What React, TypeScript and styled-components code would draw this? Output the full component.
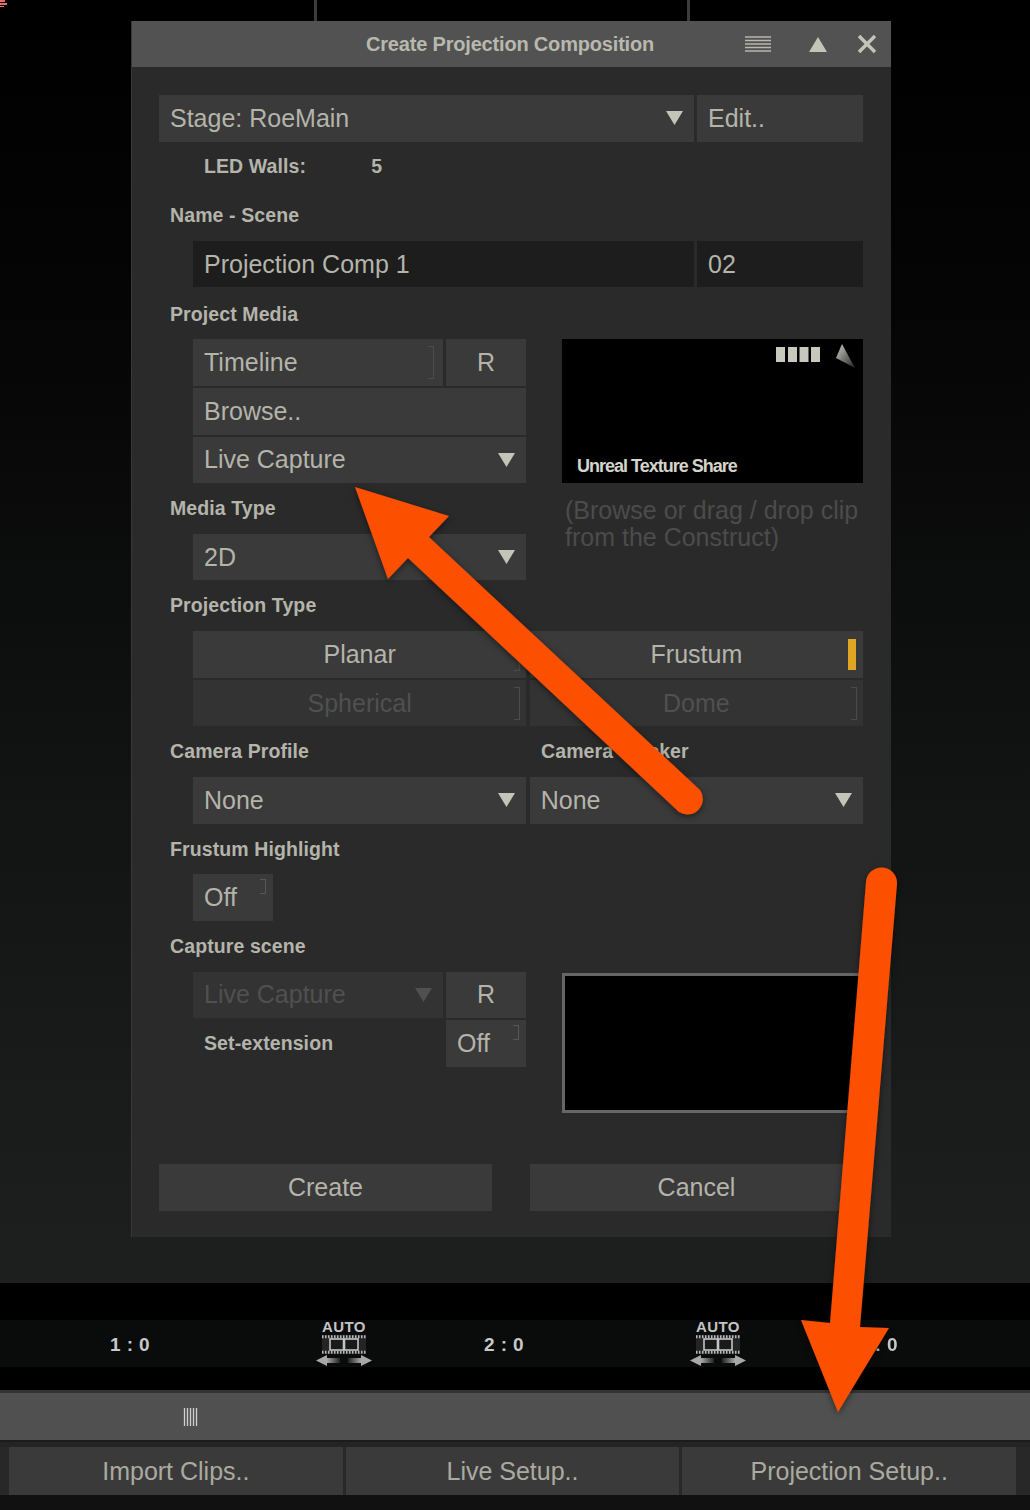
import React from "react";
import styled, { createGlobalStyle } from "styled-components";

const Global = createGlobalStyle`
  html, body { margin: 0; padding: 0; background: #000; }
  * { box-sizing: border-box; }
  #root { width: 1030px; height: 1510px; overflow: hidden; }
`;

const Page = styled.div`
  position: relative;
  width: 1030px;
  height: 1510px;
  background: #0f1010;
  font-family: "Liberation Sans", Arial, sans-serif;
  color: #b4b4aa;
  overflow: hidden;
`;
const Soft = styled.div`
  filter: blur(0.45px);
`;
const Workspace = styled.div`
  height: 1283px;
  background: linear-gradient(#000 0, #050505 320px, #121313 800px, #1d1f1f 1240px);
`;
const TopStrip = styled.div`
  height: 21px;
  display: flex;
  gap: 370px;
  padding-left: 314px;
`;
const TopLine = styled.div`
  width: 3px;
  height: 21px;
  background: #3c3c3c;
`;
const Dialog = styled.section`
  width: 760px;
  margin-left: 131px;
  height: 1216px;
  background: #2a2a2a;
  border-left: 1px solid #383838;
`;
const TitleBar = styled.header`
  height: 46px;
  background: #525252;
  display: grid;
  grid-template-columns: 1fr auto 1fr;
  align-items: center;
  padding: 0 14px 0 11px;
`;
const Title = styled.h1`
  margin: 0;
  font-size: 20px;
  font-weight: 700;
  letter-spacing: -0.18px;
  color: #b8b8ae;
`;
const TitleIcons = styled.div`
  display: flex;
  justify-content: flex-end;
  align-items: center;
`;
const Form = styled.div`
  display: flex;
  flex-direction: column;
  gap: 2.15px;
  padding: 28px 28px 0 27px;
`;
const Row = styled.div<{ $indent?: boolean }>`
  display: flex;
  gap: 3.5px;
  height: 46.5px;
  padding-left: ${(p) => (p.$indent ? "34px" : "0")};
`;
const Cell = styled.div<{ $tone?: "field" | "input"; $off?: boolean; $center?: boolean; $w?: number }>`
  flex: ${(p) => (p.$w ? `0 0 ${p.$w}px` : "1 1 0")};
  min-width: 0;
  height: 100%;
  display: flex;
  align-items: center;
  justify-content: ${(p) => (p.$center ? "center" : "flex-start")};
  padding: 0 ${(p) => (p.$center ? "0" : "11px")} 0 ${(p) => (p.$center ? "0" : "11px")};
  background: ${(p) => (p.$tone === "input" ? "#1d1d1d" : p.$off ? "#333333" : "#3a3a3a")};
  color: ${(p) => (p.$off ? "#505050" : "#b4b4aa")};
  font-size: 25px;
  white-space: nowrap;
  position: relative;
`;
const CellText = styled.span`
  flex: 1 1 auto;
`;
const CenterText = styled.span`
  flex: none;
`;
const Label = styled.div<{ $indent?: boolean; $gapAbove?: boolean }>`
  height: 46.5px;
  display: flex;
  align-items: center;
  padding-left: ${(p) => (p.$indent ? "45px" : "11px")};
  margin-top: ${(p) => (p.$gapAbove ? "1.2px" : "0")};
  font-size: 19.5px;
  font-weight: 700;
  letter-spacing: 0.1px;
  color: #b4b4aa;
`;
const LabelRow = styled(Label)`
  gap: 65px;
`;
const SplitLabels = styled.div`
  display: grid;
  grid-template-columns: 371px 1fr;
`;
const InlineLabel = styled.div`
  flex: 1 1 0;
  height: 100%;
  display: flex;
  align-items: center;
  padding-left: 11px;
  font-size: 19.5px;
  font-weight: 700;
  letter-spacing: 0.1px;
`;
const Block = styled.div`
  display: flex;
  gap: 36px;
  align-items: flex-start;
`;
const BlockLeft = styled.div`
  flex: 0 0 367px;
  display: flex;
  flex-direction: column;
  gap: 2.15px;
`;
const BlockRight = styled.div`
  flex: 1 1 0;
  min-width: 0;
`;
const Preview = styled.div`
  height: 144px;
  background: #000;
  padding: 5px 7px 6px 15px;
  display: flex;
  flex-direction: column;
  justify-content: space-between;
`;
const PreviewTop = styled.div`
  display: flex;
  justify-content: flex-end;
`;
const PreviewCaption = styled.div`
  font-size: 18px;
  font-weight: 700;
  line-height: 22px;
  letter-spacing: -1px;
  color: #d4d4ca;
`;
const Hint = styled.p`
  margin: 14px 0 0 3px;
  font-size: 25px;
  line-height: 27px;
  color: #4c4c4c;
  white-space: nowrap;
`;
const ScenePreview = styled.div`
  margin-top: 1px;
  height: 140px;
  background: #000;
  border: 3px solid #666;
`;
const Actions = styled.div`
  display: flex;
  gap: 38px;
  height: 47px;
  margin-top: 49px;
`;
const Marker = styled.i`
  flex: none;
  display: block;
  width: 6px;
  height: 33px;
  margin-right: -2px;
  border: 1px solid #4c4c4c;
  border-left: 0;
`;
const EdgeMarker = styled(Marker)`
  position: absolute;
  right: 6px;
  top: 7px;
  margin: 0;
`;
const SmallMarker = styled(Marker)`
  position: absolute;
  right: 7px;
  top: 5px;
  height: 15px;
  margin: 0;
  border-color: #565656;
`;
const ActiveMarker = styled.i`
  position: absolute;
  right: 7px;
  top: 8px;
  width: 8px;
  height: 31px;
  background: #e0a622;
`;
const Timeline = styled.div`
  height: 107px;
  padding-top: 37px;
  background: #000;
`;
const TimeRow = styled.div`
  height: 47px;
  background: #0a0b0b;
  display: flex;
  align-items: center;
  padding-left: 100px;
`;
const Track = styled.div`
  flex: 0 0 374px;
  display: flex;
  align-items: center;
`;
const TrackNumber = styled.span`
  flex: 0 0 60px;
  margin-top: 3px;
  text-align: center;
  font-size: 19px;
  font-weight: 700;
  letter-spacing: 0.4px;
  color: #c8c8c8;
  white-space: nowrap;
`;
const AutoBadge = styled.div`
  margin-left: 156px;
  flex: 0 0 54px;
  display: flex;
  flex-direction: column;
  align-items: center;
`;
const AutoText = styled.span`
  font-size: 15px;
  line-height: 16px;
  font-weight: 700;
  letter-spacing: 0.4px;
  color: #c4c4c4;
`;
const BottomBar = styled.div`
  height: 120px;
  background: #111;
`;
const GripBar = styled.div`
  height: 50px;
  background: #505050;
  border-top: 3px solid #333;
  display: flex;
  align-items: center;
  padding-left: 183px;
`;
const Divider = styled.div`
  height: 7px;
  background: #242424;
  border-top: 2px solid #1c1c1c;
`;
const BottomButtons = styled.div`
  display: flex;
  gap: 3px;
  height: 48px;
  padding: 0 14px 0 9px;
  background: #282828;
`;
const BottomButton = styled.div`
  flex: 1 1 0;
  display: flex;
  align-items: center;
  justify-content: center;
  padding-top: 1px;
  background: #3a3a3a;
  font-size: 25px;
  color: #aaaaa0;
`;
const Overlay = styled.svg`
  position: absolute;
  left: 0;
  top: 0;
  pointer-events: none;
`;

const Caret = ({ off }: { off?: boolean }) => (
  <svg width="17" height="14" viewBox="0 0 17 14" style={{ flex: "none" }}>
    <path d="M0 0H17L8.5 14Z" fill={off ? "#505050" : "#c4c4b8"} />
  </svg>
);

const Film = ({ id }: { id: string }) => (
  <svg width="56" height="33" viewBox="0 0 56 33">
    <defs>
      <linearGradient id={`${id}l`} x1="0" y1="0" x2="1" y2="0">
        <stop offset="0" stopColor="#a8a8a8" />
        <stop offset="1" stopColor="#222" />
      </linearGradient>
      <linearGradient id={`${id}r`} x1="1" y1="0" x2="0" y2="0">
        <stop offset="0" stopColor="#a8a8a8" />
        <stop offset="1" stopColor="#222" />
      </linearGradient>
    </defs>
    <rect x="6" y="0" width="44" height="19" fill="#242424" />
    <path d="M6 1.700H50M6 17.300H50" stroke="#b8b8b8" strokeWidth="3" strokeDasharray="1.500 1.500" />
    <rect x="14" y="4" width="13.500" height="11" fill="#1a1a1a" stroke="#c4c4c4" strokeWidth="1.600" />
    <rect x="28.500" y="4" width="13.500" height="11" fill="#1a1a1a" stroke="#c4c4c4" strokeWidth="1.600" />
    <path d="M0 25.500L11 20V31Z" fill="#a8a8a8" />
    <path d="M56 25.500L45 20V31Z" fill="#a8a8a8" />
    <rect x="11" y="23" width="13" height="5" fill={`url(#${id}l)`} />
    <rect x="32" y="23" width="13" height="5" fill={`url(#${id}r)`} />
  </svg>
);

export default function App() {
  return (
    <Page>
      <Global />
      <Soft>
        <Workspace>
          <TopStrip>
            <TopLine />
            <TopLine />
          </TopStrip>
          <Dialog>
            <TitleBar>
              <span />
              <Title>Create Projection Composition</Title>
              <TitleIcons>
                <svg width="26" height="17" viewBox="0 0 26 17" style={{ marginRight: 38 }}>
                  <path d="M0 1H26M0 4.500H26M0 8H26M0 11.500H26M0 15H26" stroke="#b8b8ae" strokeWidth="1.500" />
                </svg>
                <svg width="18" height="15" viewBox="0 0 18 15" style={{ marginRight: 30 }}>
                  <path d="M9 0L18 15H0Z" fill="#c4c4b8" />
                </svg>
                <svg width="20" height="20" viewBox="0 0 20 20">
                  <path d="M2 2L18 18M18 2L2 18" stroke="#c4c4b8" strokeWidth="3.400" />
                </svg>
              </TitleIcons>
            </TitleBar>
            <Form>
              <Row>
                <Cell>
                  <CellText>Stage: RoeMain</CellText>
                  <Caret />
                </Cell>
                <Cell $w={166}>Edit..</Cell>
              </Row>
              <LabelRow $indent>
                <span>LED Walls:</span>
                <span>5</span>
              </LabelRow>
              <Label>Name - Scene</Label>
              <Row $indent>
                <Cell $tone="input">Projection Comp 1</Cell>
                <Cell $tone="input" $w={166}>02</Cell>
              </Row>
              <Label $gapAbove>Project Media</Label>
              <Block>
                <BlockLeft>
                  <Row $indent>
                    <Cell>
                      <CellText>Timeline</CellText>
                      <Marker />
                    </Cell>
                    <Cell $w={80} $center><CenterText>R</CenterText></Cell>
                  </Row>
                  <Row $indent>
                    <Cell>Browse..</Cell>
                  </Row>
                  <Row $indent>
                    <Cell>
                      <CellText>Live Capture</CellText>
                      <Caret />
                    </Cell>
                  </Row>
                  <Label>Media Type</Label>
                  <Row $indent>
                    <Cell>
                      <CellText>2D</CellText>
                      <Caret />
                    </Cell>
                  </Row>
                </BlockLeft>
                <BlockRight>
                  <Preview>
                    <PreviewTop>
                      <svg width="80" height="28" viewBox="0 0 80 28">
                        <rect x="0" y="3" width="9" height="15" fill="#c8c8bc" />
                        <rect x="12" y="3" width="9" height="15" fill="#c8c8bc" />
                        <rect x="23.500" y="3" width="9" height="15" fill="#c8c8bc" />
                        <rect x="35" y="3" width="9" height="15" fill="#c8c8bc" />
                        <defs>
                          <linearGradient id="curl" x1="0" y1="0" x2="1" y2="1">
                            <stop offset="0" stopColor="#d0d0c6" />
                            <stop offset="1" stopColor="#202020" />
                          </linearGradient>
                        </defs>
                        <path d="M66 0L79 24L60 14Z" fill="url(#curl)" />
                      </svg>
                    </PreviewTop>
                    <PreviewCaption>Unreal Texture Share</PreviewCaption>
                  </Preview>
                  <Hint>
                    (Browse or drag / drop clip
                    <br />
                    from the Construct)
                  </Hint>
                </BlockRight>
              </Block>
              <Label>Projection Type</Label>
              <Row $indent>
                <Cell $center>
                  <CenterText>Planar</CenterText>
                  <EdgeMarker />
                </Cell>
                <Cell $center>
                  <CenterText>Frustum</CenterText>
                  <ActiveMarker />
                </Cell>
              </Row>
              <Row $indent>
                <Cell $center $off>
                  <CenterText>Spherical</CenterText>
                  <EdgeMarker />
                </Cell>
                <Cell $center $off>
                  <CenterText>Dome</CenterText>
                  <EdgeMarker />
                </Cell>
              </Row>
              <SplitLabels>
                <Label>Camera Profile</Label>
                <Label>Camera Tracker</Label>
              </SplitLabels>
              <Row $indent>
                <Cell>
                  <CellText>None</CellText>
                  <Caret />
                </Cell>
                <Cell>
                  <CellText>None</CellText>
                  <Caret />
                </Cell>
              </Row>
              <Label>Frustum Highlight</Label>
              <Row $indent>
                <Cell $w={80}>
                  Off
                  <SmallMarker />
                </Cell>
              </Row>
              <Label>Capture scene</Label>
              <Block>
                <BlockLeft>
                  <Row $indent>
                    <Cell $off>
                      <CellText>Live Capture</CellText>
                      <Caret off />
                    </Cell>
                    <Cell $w={80} $center><CenterText>R</CenterText></Cell>
                  </Row>
                  <Row $indent>
                    <InlineLabel>Set-extension</InlineLabel>
                    <Cell $w={80}>
                      Off
                      <SmallMarker />
                    </Cell>
                  </Row>
                </BlockLeft>
                <BlockRight>
                  <ScenePreview />
                </BlockRight>
              </Block>
              <Actions>
                <Cell $center><CenterText>Create</CenterText></Cell>
                <Cell $center><CenterText>Cancel</CenterText></Cell>
              </Actions>
            </Form>
          </Dialog>
        </Workspace>
        <Timeline>
          <TimeRow>
            <Track>
              <TrackNumber>1 : 0</TrackNumber>
              <AutoBadge>
                <AutoText>AUTO</AutoText>
                <Film id="filmA" />
              </AutoBadge>
            </Track>
            <Track>
              <TrackNumber>2 : 0</TrackNumber>
              <AutoBadge>
                <AutoText>AUTO</AutoText>
                <Film id="filmB" />
              </AutoBadge>
            </Track>
            <Track>
              <TrackNumber>3 : 0</TrackNumber>
            </Track>
          </TimeRow>
        </Timeline>
        <BottomBar>
          <GripBar>
            <svg width="16" height="18" viewBox="0 0 16 18">
              <path d="M1.500 0V18M4.500 0V18M7.500 0V18M10.500 0V18M13.500 0V18" stroke="#d0d0d0" strokeWidth="1.300" />
            </svg>
          </GripBar>
          <Divider />
          <BottomButtons>
            <BottomButton>Import Clips..</BottomButton>
            <BottomButton>Live Setup..</BottomButton>
            <BottomButton>Projection Setup..</BottomButton>
          </BottomButtons>
        </BottomBar>
      </Soft>
      <Overlay width="1030" height="1510" viewBox="0 0 1030 1510">
        <defs>
          <filter id="soft" x="-10%" y="-10%" width="120%" height="120%">
            <feDropShadow dx="0" dy="2" stdDeviation="3" floodColor="#000" floodOpacity="0.5" />
          </filter>
        </defs>
        <path d="M0 0H5V2H0ZM0 3H7V5H0ZM0 6H4V7H0Z" fill="#e86a6a" />
        <g filter="url(#soft)" fill="#fc5000" stroke="none">
          <path d="M355 487L449 516L429 537L700 790A15.500 15.500 0 0 1 679 812L408 558L388 579Z" />
          <path d="M866 882A15.500 15.500 0 0 1 897 884L860 1327L889 1328L838 1412L801 1320L830 1323Z" />
        </g>
      </Overlay>
    </Page>
  );
}
